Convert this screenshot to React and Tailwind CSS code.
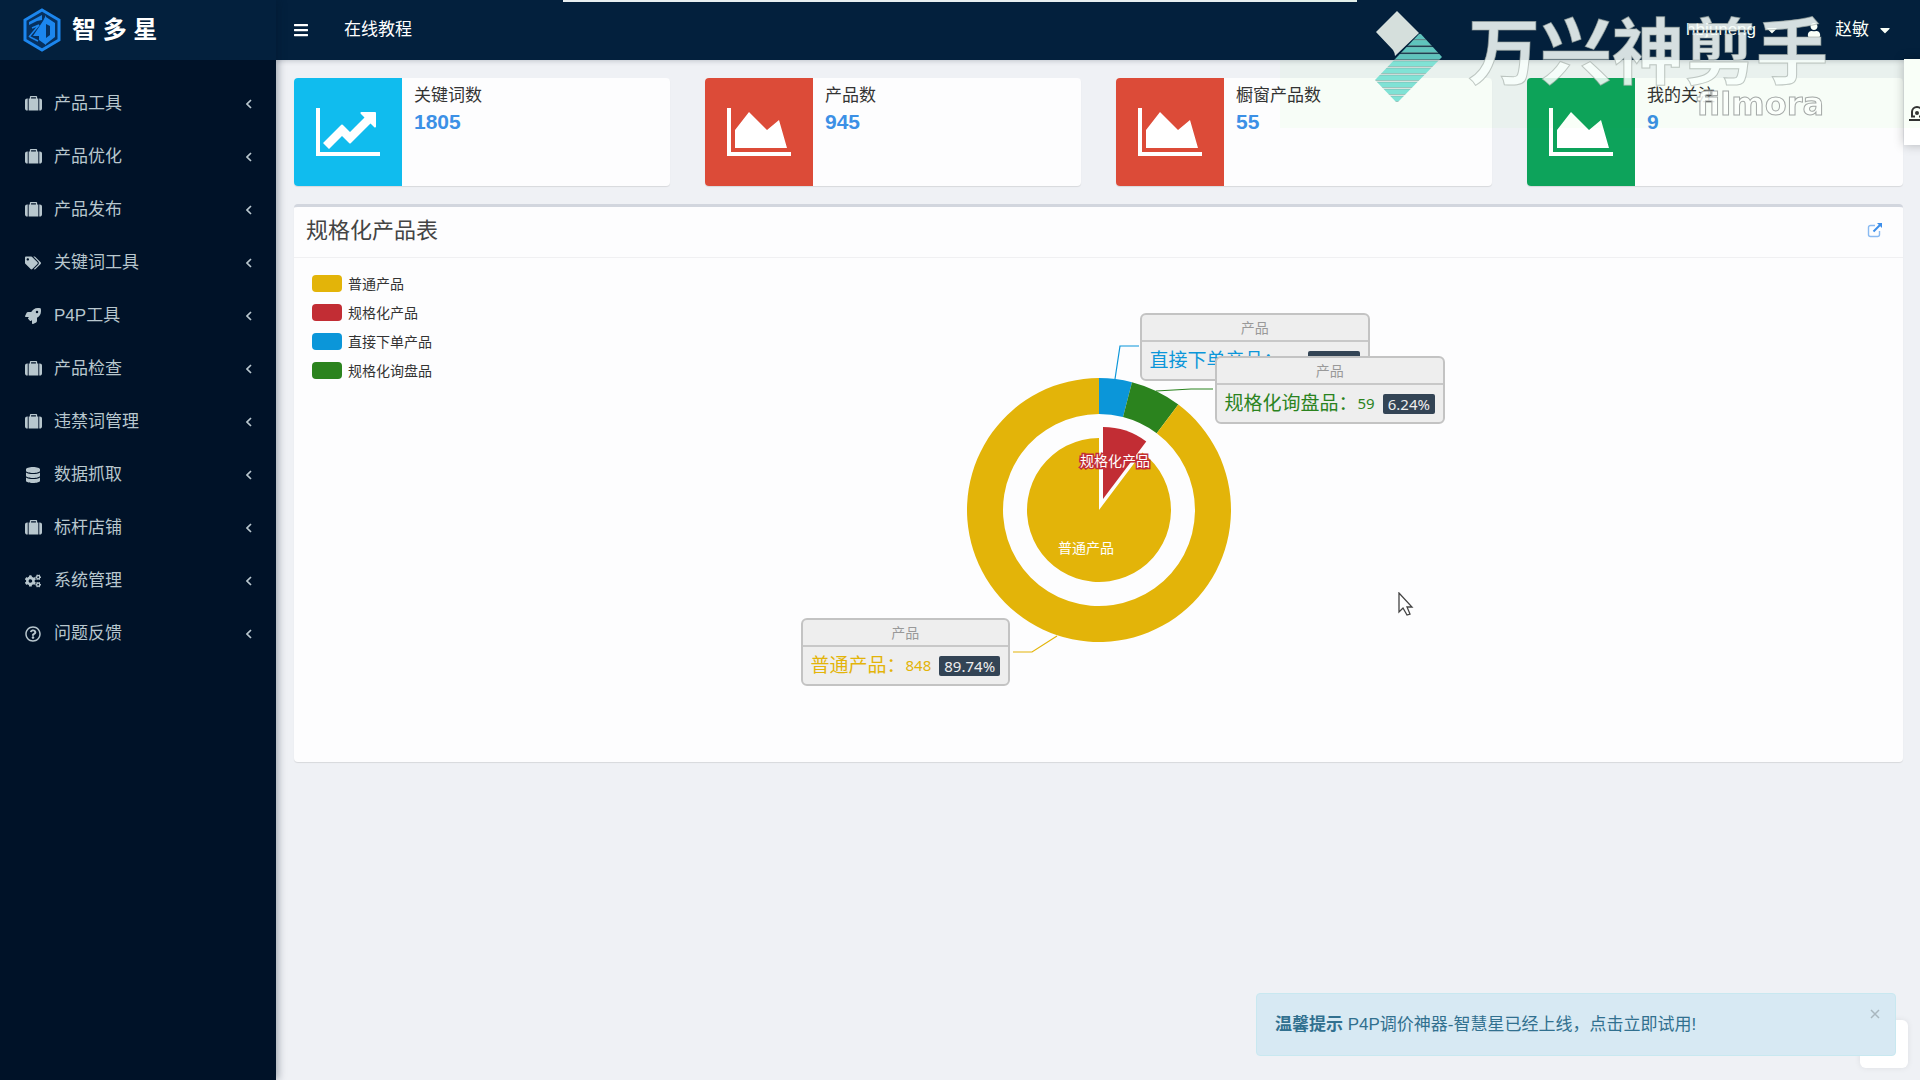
import { useState } from 'react'
import clsx from 'clsx'
import {
  FaBars,
  FaCaretDown,
  FaCogs,
  FaDatabase,
  FaRegQuestionCircle,
  FaRocket,
  FaTags,
  FaUser,
} from 'react-icons/fa'

const Suitcase = () => (
  <svg viewBox="0 0 1792 1536" className="w-[17px] fill-current">
    <path d="M640 256h512v-128h-512v128zM288 256v1280h-64q-92 0-158-66t-66-158v-832q0-92 66-158t158-66h64zM1408 256v1280h-1024v-1280h128v-160q0-40 28-68t68-28h576q40 0 68 28t28 68v160h128zM1792 480v832q0 92-66 158t-158 66h-64v-1280h64q92 0 158 66t66 158z" />
  </svg>
)

const LineChart = () => (
  <svg viewBox="0 128 2048 1536" className="w-16 fill-white">
    <path d="M2048 1536v128h-2048v-1536h128v1408h1920zM1920 288v435q0 21-19.5 29.5t-35.5-7.5l-121-121-633 633q-10 10-23 10t-23-10l-233-233-416 416-192-192 585-585q10-10 23-10t23 10l233 233 464-464-121-121q-16-16-7.5-35.5t29.5-19.5h435q14 0 23 9t9 23z" />
  </svg>
)

const AreaChart = () => (
  <svg viewBox="0 128 2048 1536" className="w-16 fill-white">
    <path d="M2048 1536v128h-2048v-1536h128v1408h1920zM1664 512l256 896h-1664v-576l448-576 576 576z" />
  </svg>
)

const menu = [
  { label: '产品工具', icon: Suitcase },
  { label: '产品优化', icon: Suitcase },
  { label: '产品发布', icon: Suitcase },
  { label: '关键词工具', icon: FaTags },
  { label: 'P4P工具', icon: FaRocket },
  { label: '产品检查', icon: Suitcase },
  { label: '违禁词管理', icon: Suitcase },
  { label: '数据抓取', icon: FaDatabase },
  { label: '标杆店铺', icon: Suitcase },
  { label: '系统管理', icon: FaCogs },
  { label: '问题反馈', icon: FaRegQuestionCircle },
]

const stats = [
  { label: '关键词数', value: 1805, color: 'bg-[#10bcee]', icon: LineChart },
  { label: '产品数', value: 945, color: 'bg-[#dc4b38]', icon: AreaChart },
  { label: '橱窗产品数', value: 55, color: 'bg-[#dc4b38]', icon: AreaChart },
  { label: '我的关注', value: 9, color: 'bg-[#0da35b]', icon: AreaChart },
]

const legend = [
  { label: '普通产品', color: 'bg-[#e3b409]' },
  { label: '规格化产品', color: 'bg-[#c22d34]' },
  { label: '直接下单产品', color: 'bg-[#0b96d9]' },
  { label: '规格化询盘品', color: 'bg-[#2b831e]' },
]

const labels = [
  { name: '直接下单产品', value: 38, place: 'left-[441px] top-[55px]', color: 'text-[#0b96d9]' },
  { name: '规格化询盘品', value: 59, place: 'left-[516px] top-[98px]', color: 'text-[#2b831e]' },
  { name: '普通产品', value: 848, place: 'left-[102px] top-[360px]', color: 'text-[#e3b409]' },
]

const TOTAL = 945
const CX = 400
const CY = 252

const point = (r, share) => {
  const a = share * 2 * Math.PI
  return `${(CX + r * Math.sin(a)).toFixed(2)} ${(CY - r * Math.cos(a)).toFixed(2)}`
}

// ring segment between two radii, shares run clockwise from the top
function arc(inner, outer, from, to) {
  const large = to - from > 0.5 ? 1 : 0
  return `M${point(outer, from)}A${outer} ${outer} 0 ${large} 1 ${point(outer, to)}L${point(inner, to)}A${inner} ${inner} 0 ${large} 0 ${point(inner, from)}Z`
}

function pie(r, from, to) {
  const large = to - from > 0.5 ? 1 : 0
  return `M${CX} ${CY}L${point(r, from)}A${r} ${r} 0 ${large} 1 ${point(r, to)}Z`
}

function Logo() {
  return (
    <svg viewBox="0 0 40 44" className="h-11 w-10">
      <path d="M20 2 37 12v20L20 42 3 32V12z" fill="#06305f" stroke="#1c86ee" strokeWidth="3" />
      <path d="M20 7v5l-5 1-8 4v-3z" fill="#1c86ee" />
      <path d="M7 29l10-12-7 3M8 29l8 4" fill="none" stroke="#1c86ee" strokeWidth="1.5" />
      <path d="M21 13 11 28h6v4l7 5V7z" fill="#1c86ee" />
      <path d="M24 9l9 6v14l-9 7v-6l4-3V18l-4-2z" fill="#1c86ee" />
    </svg>
  )
}

function Sidebar() {
  return (
    <aside className="relative z-10 w-[276px] shrink-0 bg-[#001228] shadow-[2px_0_8px_rgba(0,21,41,0.35)]">
      <a href="#" className="flex h-[60px] items-center gap-2.5 bg-[#03203d] pl-[22px] text-2xl font-bold text-white">
        <Logo />
        智 多 星
      </a>
      <nav className="pt-[17px]">
        <ul>
          {menu.map(({ label, icon: Icon }) => (
            <li key={label}>
              <a href="#" className="flex h-[53px] items-center pr-6 pl-6 text-[#b8c7ce]">
                <span className="flex w-[30px] pl-px">
                  <Icon className="size-4" />
                </span>
                {label}
                <svg viewBox="0 0 6 10" className="ml-auto h-2.5 w-1.5 fill-none stroke-current">
                  <path d="M5 1 1 5l4 4" strokeWidth="1.700" />
                </svg>
              </a>
            </li>
          ))}
        </ul>
      </nav>
    </aside>
  )
}

function Header() {
  return (
    <header className="flex h-[60px] items-center bg-[#03203d] pr-[27px] pl-[17px] text-white shadow-[0_1px_5px_rgba(0,21,41,0.2)]">
      <button type="button" aria-label="菜单">
        <FaBars className="size-4" />
      </button>
      <a href="#" className="ml-[35px]">在线教程</a>
      <button type="button" className="ml-auto flex items-center gap-2">
        hbjuneng
        <FaCaretDown className="size-4" />
      </button>
      <button type="button" className="ml-[27px] flex items-center">
        <FaUser className="mr-3.5 size-3.5" />
        赵敏
        <FaCaretDown className="ml-2 size-4" />
      </button>
    </header>
  )
}

function StatCard({ label, value, color, icon: Icon }) {
  return (
    <div className="flex h-[108px] overflow-hidden rounded-sm bg-[#fdfdfe] shadow-[0_1px_1px_rgba(0,0,0,0.1)]">
      <div className={clsx('flex w-[108px] shrink-0 items-center justify-center', color)}>
        <Icon />
      </div>
      <div className="px-3 pt-[5px]">
        <div className="leading-[26px] text-[#333]">{label}</div>
        <div className="text-[21px] leading-[26px] font-bold text-[#3c90e6]">{value}</div>
      </div>
    </div>
  )
}

function ChartLabel({ name, value, place, color }) {
  return (
    <div className={clsx('absolute rounded-md border-2 border-[#c3c3c3] bg-[#eee] font-["Noto_Sans","Noto_Sans_CJK_SC",sans-serif]', place)}>
      <div className="border-b-2 border-[#c8c8c8] text-center text-sm leading-[25px] text-[#999]">产品</div>
      <div className={clsx('flex h-[37px] items-center px-2 whitespace-nowrap', color)}>
        <span className="text-[19px]">{name}：</span>
        <span className="text-[15px]">{value}</span>
        <span className="ml-2 rounded-xs bg-[#334455] px-[5px] text-[15px] leading-5 text-[#eee]">
          {((value / TOTAL) * 100).toFixed(2)}%
        </span>
      </div>
    </div>
  )
}

function ProductChart() {
  const blue = 38 / TOTAL
  const rest = 97 / TOTAL
  return (
    <div className="relative mx-auto h-[504px] w-[800px]">
      <svg viewBox="0 0 800 504" className="h-[504px] w-[800px]">
        <path d={arc(96, 132, 0, blue)} fill="#0b96d9" />
        <path d={arc(96, 132, blue, rest)} fill="#2b831e" />
        <path d={arc(96, 132, rest, 1)} fill="#e3b409" />
        <path d={pie(72, rest, 1)} fill="#e3b409" />
        <path d={pie(72, 0, rest)} fill="#c22d34" transform="translate(4 -11)" />
        <g fill="none" strokeWidth="1.2">
          <path d="M416 121 421 88h19" stroke="#0b96d9" />
          <path d="M457 133 492 131h22" stroke="#2b831e" />
          <path d="M358 378 333 394h-19" stroke="#e3b409" />
        </g>
        <g fill="#fff" textAnchor="middle" fontSize="14">
          <text x="416" y="208" stroke="#c22d34" strokeWidth="3" paintOrder="stroke">规格化产品</text>
          <text x="387" y="295">普通产品</text>
        </g>
      </svg>
      {labels.map(item => (
        <ChartLabel key={item.name} {...item} />
      ))}
    </div>
  )
}

function ProductPanel() {
  return (
    <section className="mt-[18px] rounded-sm border-t-[3px] border-[#d2d6de] bg-[#fdfdfe] shadow-[0_1px_1px_rgba(0,0,0,0.1)]">
      <div className="flex h-[51px] items-center justify-between border-b border-[#f0f0f2] pr-5 pb-1 pl-3">
        <h3 className="text-[22px] text-[#444]">规格化产品表</h3>
        <a href="#" aria-label="打开">
          <svg viewBox="0 0 16 16" className="size-4 fill-none stroke-[#3c8eea]">
            <path d="M8 3.5H3.5a2 2 0 0 0-2 2v7a2 2 0 0 0 2 2h7a2 2 0 0 0 2-2V9" strokeWidth="1.4" opacity="0.6" />
            <path d="M6.5 9.500 13 3" strokeWidth="2" />
            <path d="M10 1h5v5z" className="fill-[#3c8eea] stroke-none" />
          </svg>
        </a>
      </div>
      <div className="relative">
        <ul className="absolute top-[11px] left-[18px] text-sm text-[#333]">
          {legend.map(item => (
            <li key={item.label} className="flex h-[29px] items-center gap-1.5">
              <span className={clsx('h-[17px] w-[30px] rounded', item.color)} />
              {item.label}
            </li>
          ))}
        </ul>
        <ProductChart />
      </div>
    </section>
  )
}

const stripes = [34, 40, 47, 54, 61, 68, 75, 82, 89, 96]

function Watermark() {
  return (
    <>
      <div className="pointer-events-none fixed top-0 right-0 z-30 h-32 w-[640px] bg-[#f9fff8] mix-blend-multiply" />
      <div className="pointer-events-none fixed top-0 right-0 z-30 h-32 w-[640px] select-none">
        <svg viewBox="1370 0 80 110" className="absolute top-0 left-[90px] h-[110px] w-20">
          <defs>
            <clipPath id="ribbon">
              <path d="M1420 33 1442 57 1397 103 1375 80z" />
            </clipPath>
          </defs>
          <path d="M1397 11 1419 33 1395 56q0-3-2-6L1376 32z" fill="#d5dfdc" />
          <g clipPath="url(#ribbon)">
            {stripes.map(y => (
              <rect key={y} x="1360" y={y} width="100" height="5.500" fill={y < 60 ? '#5fc4bd' : '#80e2d5'} stroke="#7a9c96" strokeWidth="0.5" />
            ))}
          </g>
        </svg>
        <div className="absolute top-0 right-[92px] text-right font-bold">
          <div className="pt-[15px] text-[72px] leading-[76px] text-[#f8fffb]/86 [-webkit-text-stroke:1px_#9aa39f99]">万兴神剪手</div>
          <div className='-mt-1 pr-1 font-["DejaVu_Sans"] text-[32px] leading-[34px] text-[#fbfffb]/86 [-webkit-text-stroke:1px_#a4a9a7]'>filmora</div>
        </div>
      </div>
    </>
  )
}

function Notice({ onClose }) {
  return (
    <div role="alert" className="fixed right-6 bottom-6 z-20 flex h-[63px] w-[640px] items-center rounded border border-[#c8e8f0] bg-[#d7e9f3] pl-[18px] text-[#31708f]">
      <p>
        <strong>温馨提示</strong> P4P调价神器-智慧星已经上线，点击立即试用!
      </p>
      <button type="button" aria-label="关闭" onClick={onClose} className="absolute top-3.5 right-3.5">
        <svg viewBox="0 0 12 12" className="size-3 stroke-[#a9b7bf]">
          <path d="M2 2l8 8M10 2l-8 8" strokeWidth="1.500" />
        </svg>
      </button>
    </div>
  )
}

export default function App() {
  const [notice, setNotice] = useState(true)

  return (
    <div className='flex min-h-screen overflow-hidden bg-[#eff1f5] font-["Liberation_Sans","Noto_Sans_CJK_SC",sans-serif] text-[17px]'>
      <Sidebar />
      <div className="min-w-0 flex-1">
        <Header />
        <main className="pt-[18px] pr-[17px] pl-[18px]">
          <div className="grid grid-cols-4 gap-[35px]">
            {stats.map(item => (
              <StatCard key={item.label} {...item} />
            ))}
          </div>
          <ProductPanel />
        </main>
      </div>

      <div className="fixed top-0 left-[563px] z-20 h-0.5 w-[794px] bg-[#e8eef0]" />

      {/* contact drawer, folded to its edge */}
      <button type="button" aria-label="客服" className="fixed top-[59px] -right-6 z-20 flex h-[86px] w-10 items-center overflow-hidden bg-white pt-6 pl-1 shadow-[0_0_10px_rgba(0,0,0,0.25)]">
        <svg viewBox="0 0 18 16" className="h-4 w-[18px] shrink-0">
          <path d="M4 10V6a5 5 0 0 1 10 0v4M1 14h16M3 10.500h4M11 10.500h4" fill="none" stroke="#333" strokeWidth="2" />
          <circle cx="9" cy="7" r="2" fill="#333" />
        </svg>
      </button>

      <div className="fixed right-3 bottom-3 z-10 size-12 rounded-md bg-white shadow-[0_0_6px_rgba(0,0,0,0.08)]" />
      {notice && <Notice onClose={() => setNotice(false)} />}
      <Watermark />

      <svg viewBox="0 0 16 24" className="pointer-events-none fixed top-[592px] left-[1398px] z-30 h-6 w-4">
        <path d="M1 1v19l4-4 4 7 3-1-3-7h5z" fill="#fff" stroke="#444" strokeWidth="1.300" />
      </svg>
    </div>
  )
}
